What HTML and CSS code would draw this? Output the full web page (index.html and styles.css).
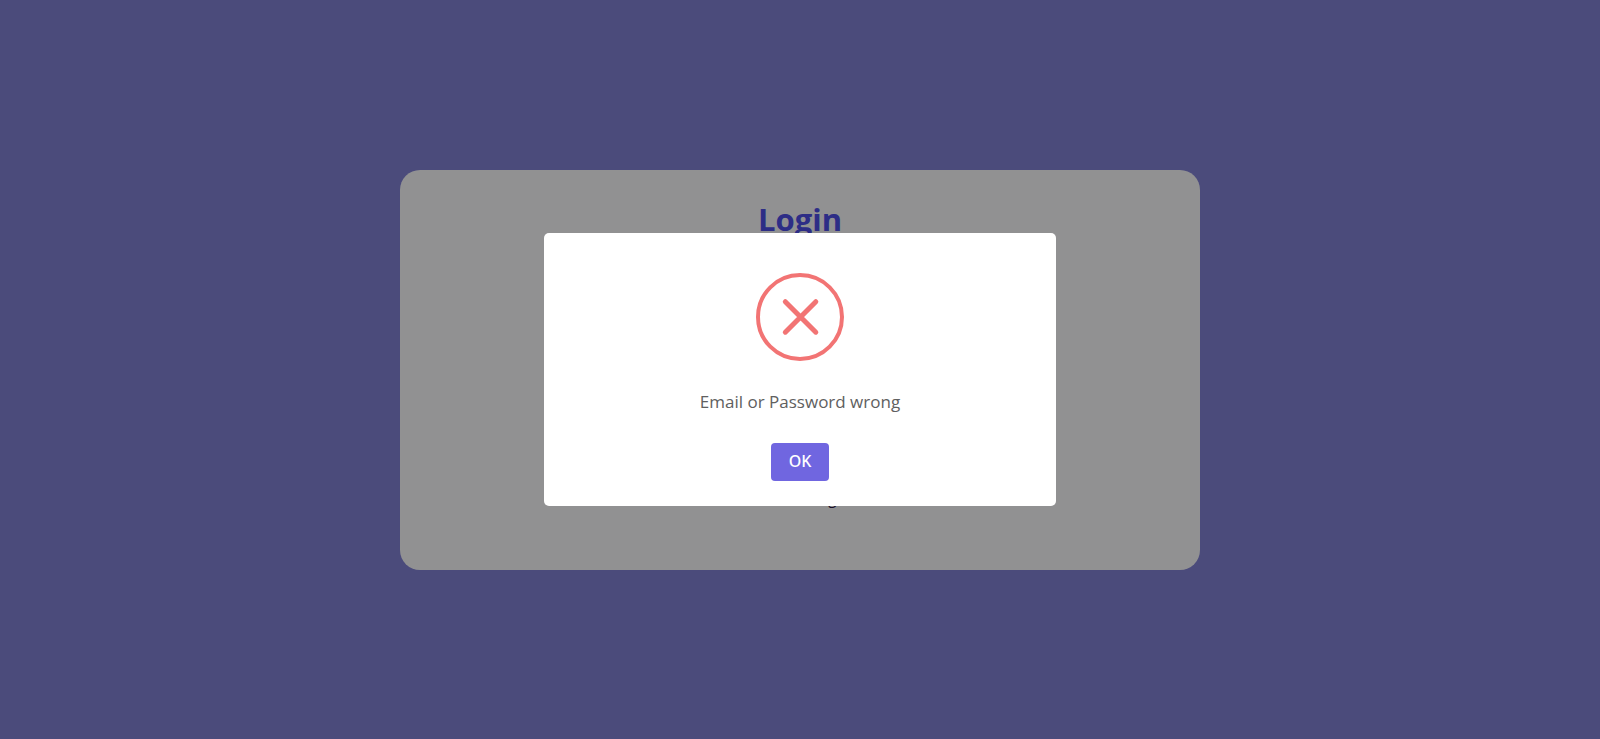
FILE: index.html
```html
<!DOCTYPE html>
<html lang="en">
<head>
<meta charset="utf-8">
<title>Login</title>
<link rel="stylesheet" href="styles.css">
</head>
<body>
<main class="page">
  <form class="card">
    <h1 class="card-title">Login</h1>
    <p class="card-note">New here? <a class="card-link" href="#">Register</a></p>
  </form>
</main>
<div class="overlay">
  <div class="dialog" role="alertdialog" aria-modal="true" aria-describedby="message">
    <svg class="dialog-icon" viewBox="0 0 88 88" aria-hidden="true">
      <circle cx="44" cy="44" r="42" fill="none" stroke="#f27474" stroke-width="4"/>
      <path d="M29.3 28.7l30.5 30.5M59.8 28.7l-30.5 30.5" fill="none" stroke="#f27474" stroke-width="5" stroke-linecap="round"/>
    </svg>
    <p class="dialog-text" id="message">Email or Password wrong</p>
    <button class="dialog-button" type="button">OK</button>
  </div>
</div>
</body>
</html>
```
FILE: styles.css
```css
* {
  box-sizing: border-box;
}

body {
  margin: 0;
  font-family: "Segoe UI", "Open Sans", "Noto Sans", sans-serif;
  background: #7d7dce;
}

.page {
  display: flex;
  align-items: center;
  justify-content: center;
  min-height: 100vh;
}

.card {
  display: flex;
  flex-direction: column;
  justify-content: space-between;
  align-items: center;
  width: 50%;
  min-height: 400px;
  padding: 27px 32px 60px;
  border-radius: 20px;
  background: #f2f2f4;
}

.card-title {
  margin: 0;
  font-size: 31px;
  line-height: 44px;
  font-weight: 700;
  color: #4b4be0;
}

.card-note {
  margin: 0;
  font-size: 15px;
  line-height: 24px;
}

.card-link {
  color: #2a1440;
  text-decoration: none;
}

.overlay {
  position: fixed;
  inset: 0;
  display: flex;
  align-items: center;
  justify-content: center;
  background: rgba(0, 0, 0, 0.4);
}

.dialog {
  display: flex;
  flex-direction: column;
  align-items: center;
  width: 32em;
  max-width: 100%;
  padding: 40px 24px 25px;
  border-radius: 5px;
  background: #fff;
}

.dialog-icon {
  width: 88px;
  height: 88px;
}

.dialog-text {
  margin: 28px 0;
  font-size: 17px;
  line-height: 26px;
  color: #606060;
}

.dialog-button {
  padding: 0 18px 2px;
  border: 0;
  border-radius: 4px;
  font-family: "Segoe UI", "Noto Sans", "Open Sans", sans-serif;
  font-size: 16px;
  font-weight: 500;
  line-height: 36px;
  color: #fff;
  background: #7066e0;
}
```
